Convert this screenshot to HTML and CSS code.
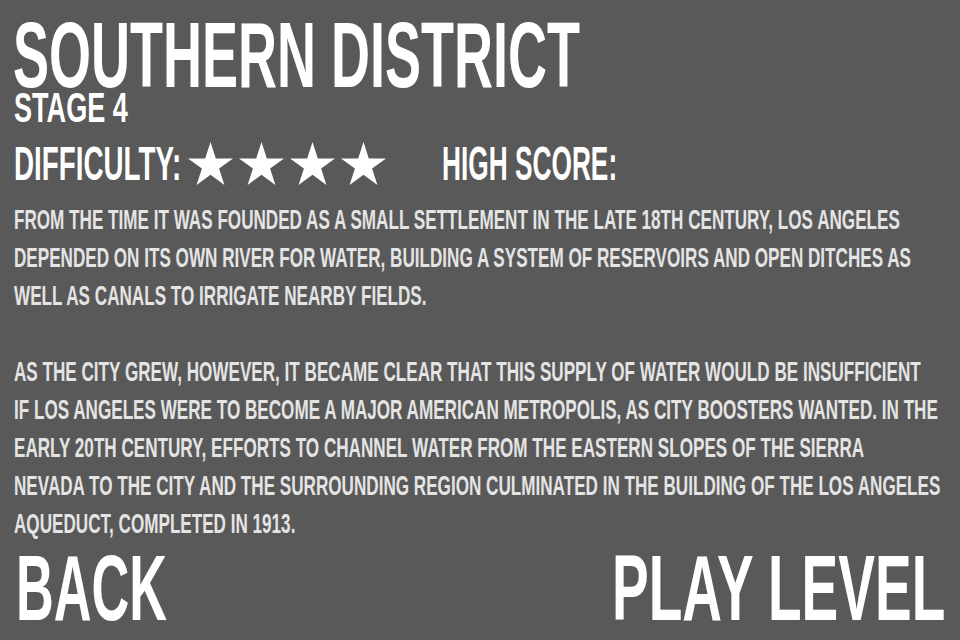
FILE: index.html
```html
<!DOCTYPE html>
<html lang="en">
<head>
<meta charset="utf-8">
<title>Southern District</title>
<link rel="stylesheet" href="styles.css">
</head>
<body>
<main class="screen">
  <header class="head">
    <h1 class="title"><span class="squeeze">SOUTHERN DISTRICT</span></h1>
    <p class="stage"><span class="squeeze">STAGE 4</span></p>
  </header>

  <div class="stats">
    <div class="label diff"><span class="squeeze">DIFFICULTY:</span></div>
    <div class="stars">
      <svg class="star" viewBox="0 0 100 95.1"><path d="M50 0 L61.8 36.33 L100 36.33 L69.1 58.8 L80.9 95.1 L50 72.65 L19.1 95.1 L30.9 58.8 L0 36.33 L38.2 36.33 Z"/></svg>
      <svg class="star" viewBox="0 0 100 95.1"><path d="M50 0 L61.8 36.33 L100 36.33 L69.1 58.8 L80.9 95.1 L50 72.65 L19.1 95.1 L30.9 58.8 L0 36.33 L38.2 36.33 Z"/></svg>
      <svg class="star" viewBox="0 0 100 95.1"><path d="M50 0 L61.8 36.33 L100 36.33 L69.1 58.8 L80.9 95.1 L50 72.65 L19.1 95.1 L30.9 58.8 L0 36.33 L38.2 36.33 Z"/></svg>
      <svg class="star" viewBox="0 0 100 95.1"><path d="M50 0 L61.8 36.33 L100 36.33 L69.1 58.8 L80.9 95.1 L50 72.65 L19.1 95.1 L30.9 58.8 L0 36.33 L38.2 36.33 Z"/></svg>
    </div>
    <div class="label score"><span class="squeeze">HIGH SCORE:</span></div>
  </div>

  <section class="story">
    <p class="squeeze">FROM THE TIME IT WAS FOUNDED AS A SMALL SETTLEMENT IN THE LATE 18TH CENTURY, LOS ANGELES<br>DEPENDED ON ITS OWN RIVER FOR WATER, BUILDING A SYSTEM OF RESERVOIRS AND OPEN DITCHES AS<br>WELL AS CANALS TO IRRIGATE NEARBY FIELDS.</p>
    <p class="squeeze">AS THE CITY GREW, HOWEVER, IT BECAME CLEAR THAT THIS SUPPLY OF WATER WOULD BE INSUFFICIENT<br>IF LOS ANGELES WERE TO BECOME A MAJOR AMERICAN METROPOLIS, AS CITY BOOSTERS WANTED. IN THE<br>EARLY 20TH CENTURY, EFFORTS TO CHANNEL WATER FROM THE EASTERN SLOPES OF THE SIERRA<br>NEVADA TO THE CITY AND THE SURROUNDING REGION CULMINATED IN THE BUILDING OF THE LOS ANGELES<br>AQUEDUCT, COMPLETED IN 1913.</p>
  </section>

  <nav class="actions">
    <a class="btn back" href="#"><span class="squeeze">BACK</span></a>
    <a class="btn play" href="#"><span class="squeeze">PLAY LEVEL</span></a>
  </nav>
</main>
</body>
</html>
```
FILE: styles.css
```css
html, body {
  margin: 0;
  padding: 0;
  height: 100%;
}

body {
  background: #595959;
  color: #ffffff;
  font-family: "Liberation Sans", Arial, sans-serif;
  font-weight: 700;
  overflow: hidden;
}

.screen {
  box-sizing: border-box;
  height: 640px;
  display: flex;
  flex-direction: column;
  padding: 20.6px 15px 17px 12px;
}

/* condensed display lettering: block-level so no wide line boxes are left behind */
.squeeze {
  display: block;
  width: max-content;
  white-space: nowrap;
  transform-origin: left center;
}

.title {
  margin: 0;
  padding-left: 1px;
  font-size: 92px;
  line-height: 69px;
  font-weight: 700;
}
.title .squeeze { transform: scaleX(0.587); }

.stage {
  margin: 0;
  padding-left: 2px;
  font-size: 42px;
  line-height: 36px;
}
.stage .squeeze { transform: scaleX(0.645); }

.stats {
  margin-top: 13.4px;
  height: 50px;
  display: flex;
  align-items: center;
}

.label {
  font-size: 47.5px;
  line-height: 50px;
  white-space: nowrap;
}

.diff {
  width: 174px;
  flex: none;
  padding-left: 2px;
}
.diff .squeeze { transform: scaleX(0.585); }

.stars {
  display: flex;
  flex: none;
  gap: 6px;
}

.star {
  width: 45px;
  height: 43px;
  fill: #ffffff;
  display: block;
}

.score {
  margin-left: 56px;
}
.score .squeeze { transform: scaleX(0.553); }

.story {
  margin-top: 12.3px;
  padding-left: 2px;
  color: #e4e4e4;
  font-size: 28px;
  line-height: 38px;
}

.story p {
  margin: 0;
  transform: scaleX(0.611);
}
.story p + p {
  margin-top: 38px;
}

.actions {
  margin-top: auto;
  display: flex;
  justify-content: space-between;
  align-items: flex-end;
}

.btn {
  color: #ffffff;
  text-decoration: none;
  font-size: 92px;
  line-height: 70px;
  white-space: nowrap;
}

.back {
  padding-left: 4px;
}
.back .squeeze { transform: scaleX(0.568); }

.play .squeeze {
  transform: scaleX(0.598);
  transform-origin: right center;
}
```
